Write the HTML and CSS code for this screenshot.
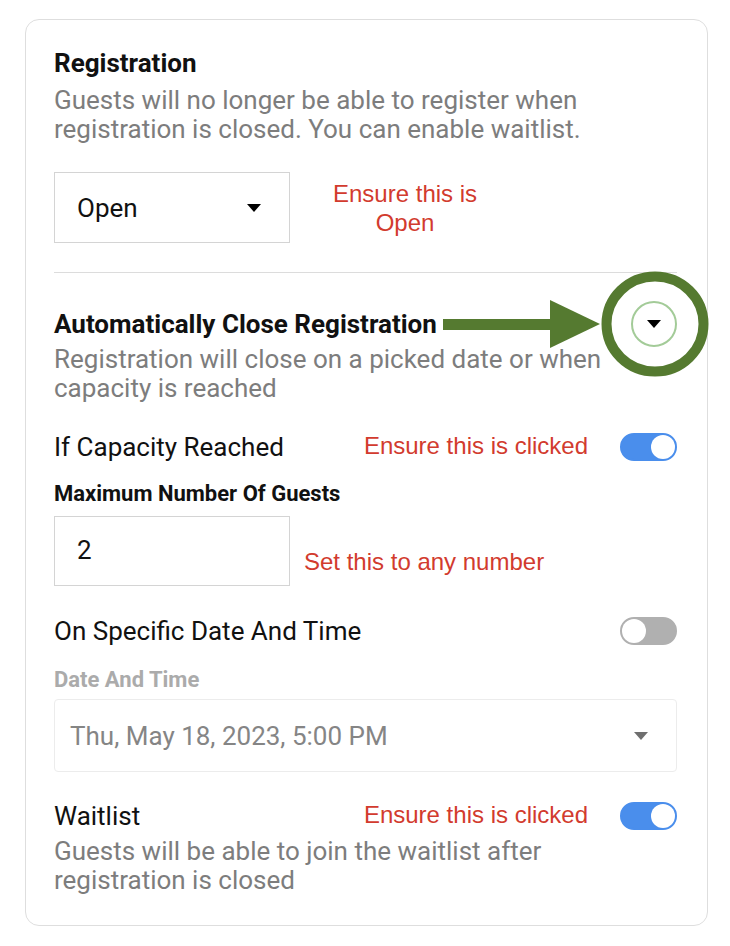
FILE: index.html
```html
<!DOCTYPE html>
<html lang="en">

<head>
    <meta charset="UTF-8">
    <meta name="viewport" content="width=device-width, initial-scale=1.0">
    <title>Registration Settings</title>
    <link rel="stylesheet" href="styles.css">
</head>

<body>

    <div class="card">

        <h2 class="title">Registration</h2>
        <p class="desc">Guests will no longer be able to register when registration is closed. You can enable waitlist.</p>

        <div class="select-row">
            <div class="select">
                <span>Open</span>
                <span class="caret"></span>
            </div>
            <p class="note note-center">Ensure this is<br>Open</p>
        </div>

        <hr class="divider">

        <div class="title-row">
            <h2 class="title">Automatically Close Registration</h2>
            <button class="collapse-btn"><span class="caret"></span></button>

            <svg class="callout" width="650" height="30" viewBox="0 0 650 30">
                <rect x="389" y="10" width="110" height="11" fill="#557a30" />
                <polygon points="496,-9 546,15 496,39" fill="#557a30" />
                <ellipse cx="601" cy="15" rx="48.5" ry="47.5" fill="none" stroke="#557a30" stroke-width="10" />
            </svg>
        </div>
        <p class="desc desc-tight">Registration will close on a picked date or when capacity is reached</p>

        <div class="toggle-row row-capacity">
            <span class="label">If Capacity Reached</span>
            <span class="note">Ensure this is clicked</span>
            <span class="toggle on"></span>
        </div>

        <h3 class="small-label">Maximum Number Of Guests</h3>
        <div class="input-row">
            <div class="input-box">2</div>
            <span class="note note-low">Set this to any number</span>
        </div>

        <div class="toggle-row row-date">
            <span class="label">On Specific Date And Time</span>
            <span class="toggle"></span>
        </div>

        <h3 class="small-label muted">Date And Time</h3>
        <div class="date-box">
            <span>Thu, May 18, 2023, 5:00 PM</span>
            <span class="caret caret-muted"></span>
        </div>

        <div class="toggle-row row-waitlist">
            <span class="label">Waitlist</span>
            <span class="note">Ensure this is clicked</span>
            <span class="toggle on"></span>
        </div>
        <p class="desc desc-tight">Guests will be able to join the waitlist after registration is closed</p>

    </div>

</body>

</html>
```

FILE: styles.css
```css
body {
    font-family: Roboto, 'Noto Sans', sans-serif;
    background-color: #ffffff;
    color: #111;
    margin: 0;
    padding: 19px 22px 0 25px;
}

.card {
    border: 1px solid #dedede;
    border-radius: 14px;
    padding: 28px 30px 28px 28px;
    height: 849px;
}

.title {
    font-size: 26px;
    font-weight: 700;
    line-height: 30px;
    margin: 0;
    color: #111;
}

.desc {
    font-size: 26px;
    line-height: 29px;
    color: #7d7d7d;
    margin: 8px 0 0;
    padding-right: 60px;
}

.desc-tight {
    margin-top: 6px;
}

.note {
    font-family: 'Liberation Sans', Arial, sans-serif;
    font-size: 24px;
    line-height: 29px;
    color: #d23b2e;
    margin: 0;
}

.note-center {
    text-align: center;
    margin-left: 43px;
}

.note-low {
    align-self: flex-end;
    margin: 0 0 10px 14px;
}

.select-row {
    display: flex;
    align-items: center;
    margin-top: 28px;
}

.select {
    width: 236px;
    height: 71px;
    box-sizing: border-box;
    border: 1px solid #d4d4d4;
    display: flex;
    align-items: center;
    justify-content: space-between;
    padding: 0 28px 0 22px;
    font-size: 26px;
}

.caret {
    width: 0;
    height: 0;
    border-left: 7px solid transparent;
    border-right: 7px solid transparent;
    border-top: 8px solid #000;
}

.caret-muted {
    border-top-color: #6f6f6f;
}

.divider {
    border: none;
    border-top: 1px solid #dcdcdc;
    margin: 29px 0 0;
}

.title-row {
    position: relative;
    display: flex;
    align-items: center;
    justify-content: space-between;
    height: 30px;
    margin-top: 36px;
}

.collapse-btn {
    width: 46px;
    height: 46px;
    margin: -8px 0 -8px;
    border-radius: 50%;
    border: 2px solid #a3cb98;
    background: none;
    display: flex;
    align-items: center;
    justify-content: center;
    padding: 0;
}

.callout {
    position: absolute;
    left: 0;
    top: 0;
    overflow: visible;
}

.toggle-row {
    display: flex;
    align-items: center;
    height: 30px;
    margin-top: 29px;
}

.toggle-row .label {
    flex: 1;
    font-size: 26px;
}

.toggle-row .note {
    margin-right: 32px;
    position: relative;
    top: -2px;
}

.toggle {
    width: 57px;
    height: 28px;
    box-sizing: border-box;
    border-radius: 14px;
    background-color: #b0b0b0;
    border: 2px solid #b0b0b0;
    display: flex;
    justify-content: flex-start;
}

.toggle::after {
    content: '';
    width: 24px;
    height: 24px;
    border-radius: 50%;
    background-color: #fff;
}

.toggle.on {
    background-color: #4a8eec;
    border-color: #4a8eec;
    justify-content: flex-end;
}

.small-label {
    font-size: 22px;
    font-weight: 700;
    line-height: 26px;
    margin: 19px 0 0;
    color: #111;
}

.small-label.muted {
    color: #ababab;
    margin-top: 21px;
}

.input-row {
    display: flex;
    margin-top: 9px;
}

.input-box {
    width: 236px;
    height: 70px;
    box-sizing: border-box;
    border: 1px solid #d4d4d4;
    padding: 0 22px 2px;
    font-size: 26px;
    line-height: 66px;
}

.row-date {
    margin-top: 30px;
}

.date-box {
    margin-top: 6px;
    height: 73px;
    box-sizing: border-box;
    border: 1px solid #ececec;
    border-radius: 4px;
    display: flex;
    align-items: center;
    justify-content: space-between;
    padding: 0 28px 0 15px;
    font-size: 26px;
    color: #858585;
}
```
